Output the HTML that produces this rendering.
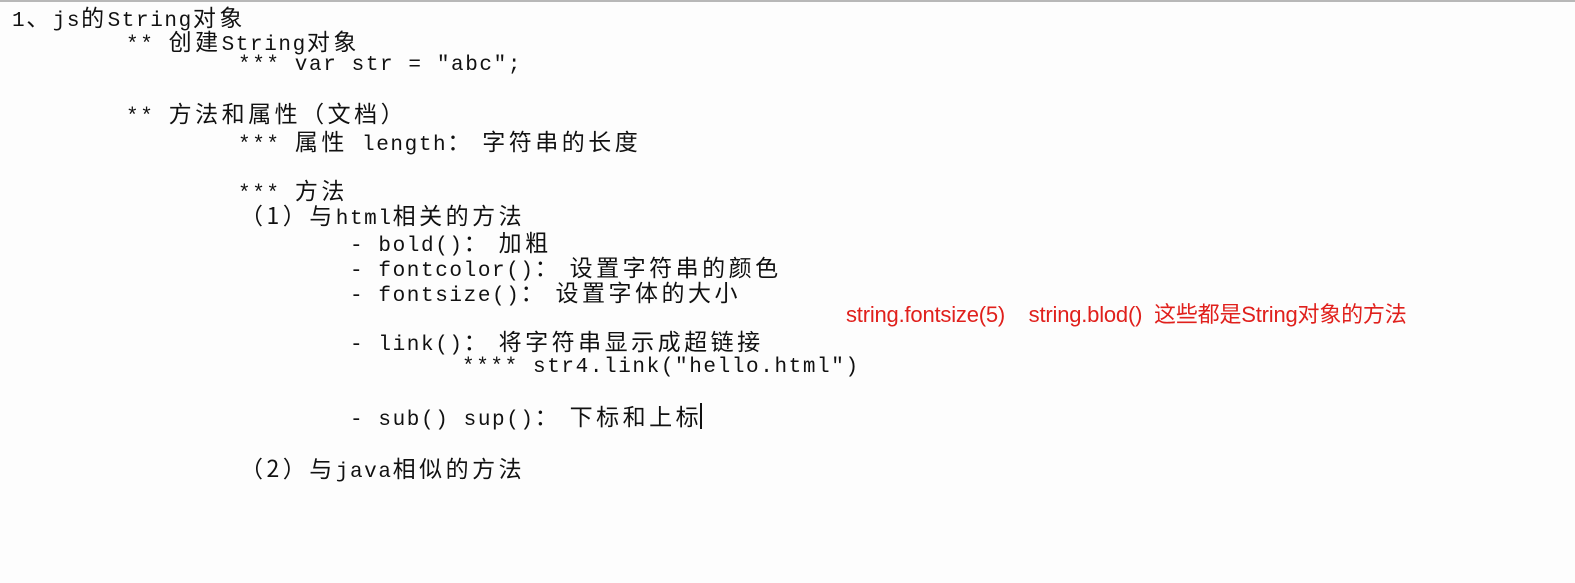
<!DOCTYPE html>
<html><head><meta charset="utf-8"><style>
body{margin:0;width:1575px;height:583px;background:#fdfdfd;position:relative;overflow:hidden;border-top:2px solid #b8b8b8;box-sizing:border-box}
.l{position:absolute;white-space:pre;font-family:"Liberation Mono","Noto Sans CJK SC",monospace;font-size:21px;letter-spacing:1.6px;color:#111;line-height:25px}
.c{font-family:"Noto Sans CJK SC",sans-serif;font-size:23px;letter-spacing:3.5px}
.k{letter-spacing:12px}
.r{position:absolute;left:846px;top:295px;font-family:"Liberation Sans","Noto Sans CJK SC",sans-serif;font-size:22px;color:#e0201c;white-space:pre;letter-spacing:-0.2px}
</style></head><body>
<div class="l" style="left:12px;top:2px">1<span class="c">、</span>js<span class="c">的</span>String<span class="c">对象</span></div>
<div class="l" style="left:126px;top:26px">** <span class="c">创建</span>String<span class="c">对象</span></div>
<div class="l" style="left:238px;top:51px">*** var str = "abc";</div>
<div class="l" style="left:126px;top:98px">** <span class="c">方法和属性（文档）</span></div>
<div class="l" style="left:238px;top:126px">*** <span class="c">属性</span> length<span class="c"><span class="k">：</span>字符串的长度</span></div>
<div class="l" style="left:238px;top:175px">*** <span class="c">方法</span></div>
<div class="l" style="left:240px;top:200px"><span class="c">（1）与</span>html<span class="c">相关的方法</span></div>
<div class="l" style="left:350px;top:227px">- bold()<span class="c"><span class="k">：</span>加粗</span></div>
<div class="l" style="left:350px;top:252px">- fontcolor()<span class="c"><span class="k">：</span>设置字符串的颜色</span></div>
<div class="l" style="left:350px;top:277px">- fontsize()<span class="c"><span class="k">：</span>设置字体的大小</span></div>
<div class="l" style="left:350px;top:326px">- link()<span class="c"><span class="k">：</span>将字符串显示成超链接</span></div>
<div class="l" style="left:462px;top:353px">**** str4.link("hello.html")</div>
<div class="l" style="left:350px;top:401px">- sub() sup()<span class="c"><span class="k">：</span>下标和上标</span></div>
<div style="position:absolute;left:700px;top:401px;width:2px;height:26px;background:#111"></div>
<div class="l" style="left:240px;top:453px"><span class="c">（2）与</span>java<span class="c">相似的方法</span></div>
<div class="r">string.fontsize(5)    string.blod()  这些都是String对象的方法</div>
</body></html>
